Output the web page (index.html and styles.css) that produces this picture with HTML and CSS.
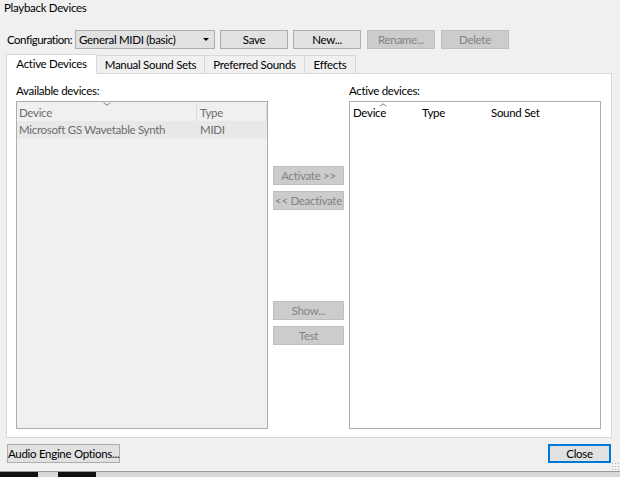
FILE: index.html
```html
<!DOCTYPE html>
<html>
<head>
<meta charset="utf-8">
<link rel="stylesheet" href="styles.css">
</head>
<body>
<div class="window">
  <div class="titlebar">Playback Devices</div>
  <div class="config">
    <span class="cfg-label">Configuration:</span>
    <div class="combo"><span>General MIDI (basic)</span><span class="arrow"></span></div>
    <button class="btn w68">Save</button>
    <button class="btn w68">New...</button>
    <button class="btn w68 disabled">Rename...</button>
    <button class="btn w68 disabled">Delete</button>
  </div>
  <div class="tabs">
    <div class="tab active t1">Active Devices</div>
    <div class="tab t2">Manual Sound Sets</div>
    <div class="tab t3">Preferred Sounds</div>
    <div class="tab t4">Effects</div>
  </div>
  <div class="panel">
    <div class="col left">
      <div class="label">Available devices:</div>
      <div class="list disabled-list">
        <div class="lhead">
          <div class="hc c-dev1">Device<span class="sort down"></span></div>
          <div class="hc c-type1">Type</div>
        </div>
        <div class="lrow">
          <div class="rc c-dev1">Microsoft GS Wavetable Synth</div>
          <div class="rc c-type1">MIDI</div>
        </div>
      </div>
    </div>
    <div class="mid">
      <button class="btn mbtn disabled first">Activate &gt;&gt;</button>
      <button class="btn mbtn disabled">&lt;&lt; Deactivate</button>
      <button class="btn mbtn disabled show">Show...</button>
      <button class="btn mbtn disabled">Test</button>
    </div>
    <div class="col right">
      <div class="label">Active devices:</div>
      <div class="list">
        <div class="lhead">
          <div class="hc c-dev2">Device<span class="sort up"></span></div>
          <div class="hc c-type2">Type</div>
          <div class="hc c-set2">Sound Set</div>
        </div>
      </div>
    </div>
  </div>
  <div class="bottom">
    <button class="btn aeo">Audio Engine Options...</button>
    <button class="btn close">Close</button>
  </div>
  <div class="grip"></div>
</div>
<div class="desktop">
  <span class="blk" style="width:38px"></span><span class="gap" style="width:20px"></span><span class="blk" style="width:38px"></span><span class="gap" style="width:450px"></span>
</div>
</body>
</html>
```
FILE: styles.css
```css
html, body {
  margin: 0;
  padding: 0;
}
body {
  width: 620px;
  height: 477px;
  overflow: hidden;
  background: #f0f0f0;
  font-family: "Lato", "Noto Sans", sans-serif;
  font-size: 11.5px;
  letter-spacing: -0.3px;
  color: #000;
}
.window {
  position: relative;
  height: 471px;
  background: #f0f0f0;
}
.titlebar {
  height: 20px;
  line-height: 16px;
  padding-left: 4px;
  background: #f0f0f0;
}
.config {
  display: flex;
  align-items: center;
  margin-top: 10px;
  height: 19px;
  padding-left: 7px;
  white-space: nowrap;
}
.cfg-label {
  width: 68px;
  letter-spacing: -0.5px;
}
.combo {
  box-sizing: border-box;
  width: 140px;
  height: 19px;
  background: #e1e1e1;
  border: 1px solid #adadad;
  display: flex;
  align-items: center;
  justify-content: space-between;
  padding: 0 5px 0 3px;
  margin-right: 5px;
}
.arrow {
  width: 0;
  height: 0;
  border-left: 3px solid transparent;
  border-right: 3px solid transparent;
  border-top: 3px solid #000;
}
.btn {
  box-sizing: border-box;
  font: inherit;
  letter-spacing: inherit;
  color: #000;
  background: #e1e1e1;
  border: 1px solid #adadad;
  height: 19px;
  padding: 0;
  line-height: 16px;
  white-space: nowrap;
}
.w68 {
  width: 68px;
  margin-right: 5px;
}
.config .w68:nth-of-type(2) { margin-right: 6px; }
.config .w68:nth-of-type(3) { margin-right: 6px; }
.btn.disabled {
  background: #cccccc;
  border-color: #bfbfbf;
  color: #838383;
}
.tabs {
  display: flex;
  margin-left: 6px;
  margin-top: 5px;
  height: 19px;
  align-items: flex-end;
  white-space: nowrap;
}
.tab {
  box-sizing: border-box;
  height: 18px;
  border: 1px solid #d9d9d9;
  border-bottom: none;
  background: #f0f0f0;
  text-align: center;
  line-height: 17px;
  margin-left: -1px;
}
.tab.active {
  height: 20px;
  background: #fff;
  margin-bottom: -1px;
  position: relative;
  z-index: 1;
  margin-left: 0;
}
.t1 { width: 91px; }
.t2 { width: 109px; }
.t3 { width: 101px; }
.t4 { width: 52px; }
.panel {
  box-sizing: border-box;
  margin-left: 6px;
  width: 606px;
  height: 365px;
  background: #fff;
  border: 1px solid #d9d9d9;
  display: flex;
  padding: 10px 10px 8px 9px;
}
.col {
  display: flex;
  flex-direction: column;
}
.left { width: 252px; }
.right { width: 252px; }
.label {
  height: 17px;
  line-height: 14px;
}
.list {
  box-sizing: border-box;
  flex: 1;
  border: 1px solid #adadad;
  background: #fff;
  padding-top: 2px;
}
.disabled-list {
  background: #f0f0f0;
  color: #6d6d6d;
}
.lhead, .lrow {
  display: flex;
  height: 17px;
  line-height: 17px;
}
.lrow {
  background: #e8e8e8;
}
.hc, .rc {
  box-sizing: border-box;
  padding-left: 2px;
  position: relative;
  white-space: nowrap;
}
.disabled-list .hc { border-right: 1px solid #dcdcdc; }
.c-dev1 { width: 180px; }
.c-type1 { width: 70px; padding-left: 3px; }
.c-dev2 { width: 69px; padding-left: 3px; }
.c-type2 { width: 69px; padding-left: 3px; }
.c-set2 { width: 100px; padding-left: 3px; }
.sort {
  position: absolute;
  width: 5px;
  height: 5px;
  border-color: #808080;
  border-style: solid;
  border-width: 0;
}
.sort.down {
  left: 87px;
  border-right-width: 1px;
  border-bottom-width: 1px;
  transform: scale(0.9, 0.6) rotate(45deg);
  top: -4px;
}
.sort.up {
  left: 30px;
  border-left-width: 1px;
  border-top-width: 1px;
  transform: scale(0.9, 0.6) rotate(45deg);
  top: -1px;
}
.mid {
  width: 71px;
  margin-left: 5px;
  margin-right: 5px;
  display: flex;
  flex-direction: column;
}
.mbtn {
  width: 71px;
  height: 19px;
  margin-top: 6px;
}
.mbtn.first { margin-top: 82px; }
.mbtn.show { margin-top: 91px; }
.bottom {
  display: flex;
  justify-content: space-between;
  padding: 0 9px 0 7px;
  margin-top: 6px;
}
.aeo {
  width: 113px;
  height: 19px;
}
.close {
  width: 63px;
  height: 19px;
  border: 2px solid #0078d7;
  line-height: 15px;
}
.grip {
  position: absolute;
  right: 1px;
  bottom: 1px;
  width: 8px;
  height: 8px;
  background-image: radial-gradient(circle, #b0b0b0 0.8px, transparent 1px);
  background-size: 3px 3px;
}
.desktop {
  height: 5px;
  background: #d8d8d8;
  border-top: 1px solid #9a9a9a;
  display: flex;
}
.blk { display: inline-block; height: 5px; background: #111; }
.gap { display: inline-block; height: 5px; }
```
